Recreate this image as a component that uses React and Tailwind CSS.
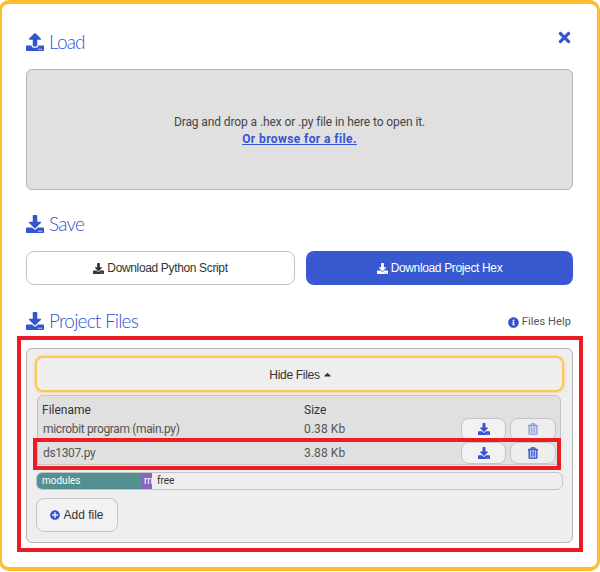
import React from "react";
import { FaUpload, FaDownload, FaInfoCircle, FaPlusCircle, FaRegTrashAlt, FaTimes, FaCaretUp } from "react-icons/fa";

const BODY_FONT = "font-['Roboto',sans-serif]";
const TITLE_FONT = "font-['Lato',sans-serif]";
const BUTTON_FONT = "font-['Liberation_Sans',Arial,sans-serif]";

function SectionTitle({ icon: Icon, children }) {
  return (
    <h2 className={`flex items-center text-[#3454d1] text-[19px] leading-[26px] font-light tracking-[-0.8px] ${TITLE_FONT}`}>
      <Icon className="w-[18px] h-[18px] mr-[5px]" />
      {children}
    </h2>
  );
}

function FileRow({ name, size, disabled, buttonHeight }) {
  return (
    <div className="flex h-[24px] items-center text-[12px] text-[#555]">
      <div className="w-[266px] pl-[5px] tracking-[-0.35px]">{name}</div>
      <div className="w-[157px] tracking-[0.1px]">{size}</div>
      <button className={`flex items-center justify-center w-[45px] rounded-[8px] border border-[#c4c4c4] bg-[#f2f2f2] text-[#3454d1] ${buttonHeight}`}>
        <FaDownload className="w-[12px] h-[12px]" />
      </button>
      <button className={`ml-[4px] flex items-center justify-center w-[46px] rounded-[8px] border border-[#c4c4c4] bg-[#eeeeee] text-[#3454d1] ${buttonHeight}`}>
        <FaRegTrashAlt className={`w-[10px] h-[12px] stroke-current stroke-[20] ${disabled ? "opacity-50" : ""}`} />
      </button>
    </div>
  );
}

export default function App() {
  return (
    <div className="relative w-[600px] h-[572px] overflow-hidden bg-white">
      <div className="w-[601px] h-[571px] -ml-[1px] border-[3px] border-t-4 border-b-4 border-[#fdbd2e] rounded-[10px] bg-white pt-[25px] pl-[24px] pr-[24px]">
        <div className="flex justify-between">
          <SectionTitle icon={FaUpload}>Load</SectionTitle>
          <button className="text-[#3454d1] -mt-[9px] mr-[0px]">
            <FaTimes className="w-[17px] h-[17px]" />
          </button>
        </div>

        <div className={`mt-[14px] h-[121px] rounded-[6px] border border-[#b5b5b5] bg-[#e0e0e0] flex flex-col items-center justify-center pt-[2px] text-[12px] leading-[17px] text-[#444] ${BODY_FONT}`}>
          <p className="tracking-[-0.1px]">Drag and drop a .hex or .py file in here to open it.</p>
          <a className="font-bold underline tracking-[0.4px] text-[#3454d1]">Or browse for a file.</a>
        </div>

        <div className="mt-[21px]">
          <SectionTitle icon={FaDownload}>Save</SectionTitle>
        </div>

        <div className={`mt-[14px] flex gap-[11px] text-[12px] tracking-[-0.35px] ${BUTTON_FONT}`}>
          <button className="flex-1 h-[34px] rounded-[8px] border border-[#c4c4c4] bg-white text-[#333] flex items-center justify-center">
            <FaDownload className="w-[11px] h-[11px] mr-[3px]" />
            Download Python Script
          </button>
          <button className="flex-1 h-[34px] rounded-[8px] bg-[#3859d0] text-white flex items-center justify-center">
            <FaDownload className="w-[11px] h-[11px] mr-[3px]" />
            Download Project Hex
          </button>
        </div>

        <div className="mt-[23px] flex items-center justify-between">
          <SectionTitle icon={FaDownload}>Project Files</SectionTitle>
          <div className={`flex items-center text-[11px] tracking-[0.1px] text-[#555] mr-[2px] mt-[3px] ${BODY_FONT}`}>
            <FaInfoCircle className="w-[11px] h-[11px] text-[#3454d1] mr-[3px]" />
            Files Help
          </div>
        </div>

        <div className={`mt-[14px] h-[195px] rounded-[6px] border border-[#b5b5b5] bg-[#eeeeee] pt-[7px] px-[8px] ${BODY_FONT}`}>
          <button className={`w-full h-[36px] rounded-[8px] border-2 border-[#fcc65a] shadow-[0_0_3px_#fcc65a] bg-[#eeeeee] flex items-center justify-center pl-[3px] pt-[1px] text-[12px] tracking-[-0.3px] text-[#333] ${BUTTON_FONT}`}>
            Hide Files
            <FaCaretUp className="w-[11px] h-[11px] ml-[2px]" />
          </button>

          <div className="mt-[3px] ml-[2px] mr-[3px] rounded-t-[6px] border border-[#c4c4c4] bg-[#e0e0e0] h-[70px]">
            <div className="flex h-[21px] items-center pt-[6px] text-[12px] text-[#333]">
              <div className="w-[266px] pl-[4px]">Filename</div>
              <div>Size</div>
            </div>
            <FileRow name="microbit program (main.py)" size="0.38 Kb" disabled buttonHeight="h-[23px]" />
            <FileRow name="ds1307.py" size="3.88 Kb" buttonHeight="h-[22px]" />
          </div>

          <div className="mt-[7px] mx-[1px] h-[18px] rounded-[6px] border border-[#c4c4c4] bg-[#eeeeee] flex overflow-hidden text-[10px] leading-[16px]">
            <div className="w-[105px] bg-[#559090] text-white pl-[5px]">modules</div>
            <div className="w-[10px] bg-[#8a65c2] text-white pl-[2px] overflow-hidden">m</div>
            <div className="pl-[5px] text-[#333]">free</div>
          </div>

          <button className={`mt-[8px] ml-[1px] w-[82px] h-[34px] rounded-[8px] border border-[#c4c4c4] bg-[#f2f2f2] flex items-center justify-center text-[12px] text-[#333] ${BUTTON_FONT}`}>
            <FaPlusCircle className="w-[10px] h-[10px] text-[#3454d1] mr-[3px]" />
            Add file
          </button>
        </div>
      </div>

      {/* red annotation boxes drawn over the shot */}
      <div className="absolute left-[17px] top-[336px] w-[566px] h-[216px] border-[4px] border-[#ed1c24]" />
      <div className="absolute left-[33px] top-[438px] w-[528px] h-[32px] border-[4px] border-[#ed1c24]" />
    </div>
  );
}
